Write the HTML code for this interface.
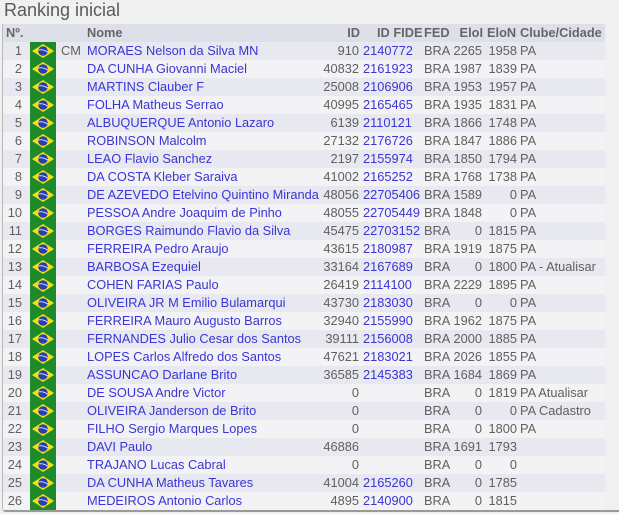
<!DOCTYPE html>
<html><head><meta charset="utf-8"><style>
*{margin:0;padding:0;box-sizing:border-box}
body{width:619px;height:514px;background:#f0f0f0;font-family:"Liberation Sans",sans-serif;font-size:12.8px;color:#606060;position:relative;overflow:hidden}
.t{position:absolute;left:4px;top:0px;font-size:18px;color:#5a5a5a}
.frame{position:absolute;left:2px;top:24px;width:617px;height:488px;border-left:1px solid #b8b8b8;border-bottom:2px solid #9a9a9a;border-bottom-left-radius:4px}
.r{position:absolute;left:3px;width:602px;height:18px;line-height:18px;white-space:nowrap}
.r.o{background:#e8e9f0}.r.e{background:#f3f3f5}
.r.h{background:#dde0e8;font-weight:bold;color:#666}
.r span{position:absolute;top:0}
.n{right:583px;text-align:right}
.ti{left:58px}
.nm{left:84px;color:#3a35d6}
.id{right:246px;text-align:right}
.fi{left:360px;color:#3a35d6}
.fe{left:421px}
.ei{right:123px;text-align:right}
.en{right:88px;text-align:right}
.cl{left:517px}
.flag{position:absolute;left:30px;top:42px;width:26px;height:468px;background:#1f8a2a}
</style></head><body>
<div class="t">Ranking inicial</div>
<div class="frame"></div>
<div class="r h" style="top:24px"><span style="left:3px">Nº.</span><span class="nm" style="color:#666">Nome</span><span class="id" style="right:245px">ID</span><span style="left:374px">ID FIDE</span><span class="fe">FED</span><span class="ei" style="right:122px">EloI</span><span style="left:484px">EloN</span><span style="left:517px">Clube/Cidade</span></div>
<div id="rows"></div>
<div class="flag"></div>
<svg id="fl" style="position:absolute;left:30px;top:42px" width="26" height="468"></svg>
<script>
var d=[
["1","CM","MORAES Nelson da Silva MN","910","2140772","2265","1958","PA"],
["2","","DA CUNHA Giovanni Maciel","40832","2161923","1987","1839","PA"],
["3","","MARTINS Clauber F","25008","2106906","1953","1957","PA"],
["4","","FOLHA Matheus Serrao","40995","2165465","1935","1831","PA"],
["5","","ALBUQUERQUE Antonio Lazaro","6139","2110121","1866","1748","PA"],
["6","","ROBINSON Malcolm","27132","2176726","1847","1886","PA"],
["7","","LEAO Flavio Sanchez","2197","2155974","1850","1794","PA"],
["8","","DA COSTA Kleber Saraiva","41002","2165252","1768","1738","PA"],
["9","","DE AZEVEDO Etelvino Quintino Miranda","48056","22705406","1589","0","PA"],
["10","","PESSOA Andre Joaquim de Pinho","48055","22705449","1848","0","PA"],
["11","","BORGES Raimundo Flavio da Silva","45475","22703152","0","1815","PA"],
["12","","FERREIRA Pedro Araujo","43615","2180987","1919","1875","PA"],
["13","","BARBOSA Ezequiel","33164","2167689","0","1800","PA - Atualisar"],
["14","","COHEN FARIAS Paulo","26419","2114100","2229","1895","PA"],
["15","","OLIVEIRA JR M Emilio Bulamarqui","43730","2183030","0","0","PA"],
["16","","FERREIRA Mauro Augusto Barros","32940","2155990","1962","1875","PA"],
["17","","FERNANDES Julio Cesar dos Santos","39111","2156008","2000","1885","PA"],
["18","","LOPES Carlos Alfredo dos Santos","47621","2183021","2026","1855","PA"],
["19","","ASSUNCAO Darlane Brito","36585","2145383","1684","1869","PA"],
["20","","DE SOUSA Andre Victor","0","","0","1819","PA Atualisar"],
["21","","OLIVEIRA Janderson de Brito","0","","0","0","PA Cadastro"],
["22","","FILHO Sergio Marques Lopes","0","","0","1800","PA"],
["23","","DAVI Paulo","46886","","1691","1793",""],
["24","","TRAJANO Lucas Cabral","0","","0","0",""],
["25","","DA CUNHA Matheus Tavares","41004","2165260","0","1785",""],
["26","","MEDEIROS Antonio Carlos","4895","2140900","0","1815",""]];
var h="",s="";
d.forEach(function(r,i){
h+='<div class="r '+(i%2?'e':'o')+'" style="top:'+(42+i*18)+'px"><span class="n">'+r[0]+'</span><span class="ti">'+r[1]+'</span><span class="nm">'+r[2]+'</span><span class="id">'+r[3]+'</span><span class="fi">'+r[4]+'</span><span class="fe">BRA</span><span class="ei">'+r[5]+'</span><span class="en">'+r[6]+'</span><span class="cl">'+r[7]+'</span></div>';
var y=i*18+9;
s+='<polygon points="2,'+y+' 13,'+(y-7)+' 24,'+y+' 13,'+(y+7)+'" fill="#f4e01a"/><circle cx="13" cy="'+y+'" r="4.8" fill="#2a3fb0"/><path d="M8.5,'+(y-1)+' Q13,'+(y-2)+' 17.5,'+(y+1)+'" stroke="#fff" stroke-width="0.8" fill="none"/>';
});
document.getElementById('rows').innerHTML=h;
document.getElementById('fl').innerHTML=s;
</script>
</body></html>
